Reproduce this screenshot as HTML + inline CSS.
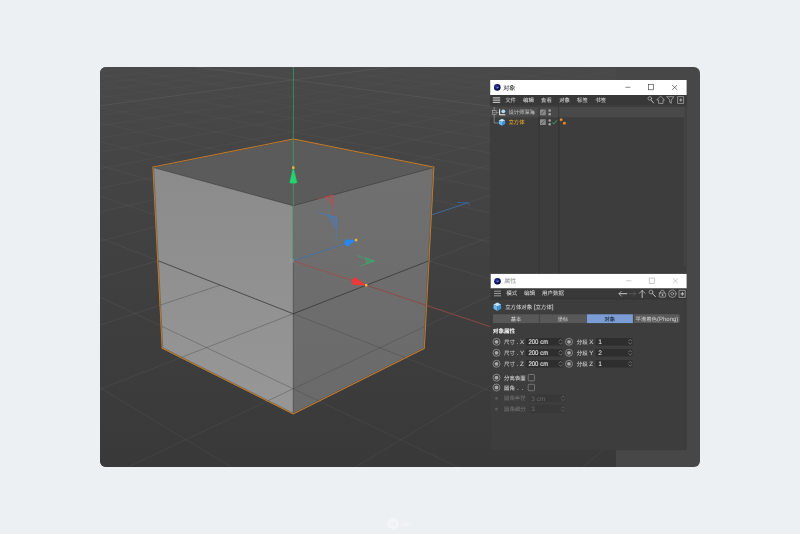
<!DOCTYPE html>
<html lang="zh-CN"><head><meta charset="utf-8"><title>C4D</title>
<style>html,body{margin:0;padding:0;background:#edf0f3;}body{width:800px;height:534px;position:relative;overflow:hidden;font-family:"Liberation Sans","Noto Sans CJK SC",sans-serif;}</style>
</head><body>
<svg width="800" height="534" viewBox="0 0 800 534" style="position:absolute;left:0;top:0" text-rendering="geometricPrecision" font-family='"Liberation Sans","Noto Sans CJK SC",sans-serif'>
<defs>
<clipPath id="vp"><rect x="100" y="67" width="600" height="400" rx="6" ry="6"/></clipPath>
<clipPath id="v3d"><rect x="100" y="67" width="516" height="400"/></clipPath>
<linearGradient id="bg" x1="0" y1="0" x2="0" y2="1"><stop offset="0" stop-color="#494949"/><stop offset="0.5" stop-color="#404040"/><stop offset="1" stop-color="#393939"/></linearGradient>
<linearGradient id="gg" gradientUnits="userSpaceOnUse" x1="0" y1="67" x2="0" y2="467"><stop offset="0" stop-color="#585858" stop-opacity="0.25"/><stop offset="0.2" stop-color="#585858" stop-opacity="0.6"/><stop offset="0.6" stop-color="#585858" stop-opacity="0.75"/><stop offset="1" stop-color="#585858" stop-opacity="0.5"/></linearGradient>
<filter id="soft" x="-5%" y="-5%" width="110%" height="110%"><feGaussianBlur stdDeviation="0.28"/></filter>
<linearGradient id="lf" x1="0" y1="0" x2="0" y2="1"><stop offset="0" stop-color="#8b8b8b"/><stop offset="1" stop-color="#979797"/></linearGradient>
<linearGradient id="rf" x1="0" y1="0" x2="0" y2="1"><stop offset="0" stop-color="#707070"/><stop offset="1" stop-color="#6a6a6a"/></linearGradient>
<radialGradient id="c4d" cx="0.35" cy="0.35" r="0.8"><stop offset="0" stop-color="#2a3aa8"/><stop offset="0.45" stop-color="#101460"/><stop offset="1" stop-color="#080a38"/></radialGradient>
<radialGradient id="tag" cx="0.35" cy="0.3" r="0.8"><stop offset="0" stop-color="#f0a04a"/><stop offset="0.6" stop-color="#c8701e"/><stop offset="1" stop-color="#7a4010"/></radialGradient>
<g id="radio"><circle r="3.5" fill="none" stroke="#b4b4b4" stroke-width="0.6"/><circle r="1.9" fill="#a8a8a8"/></g>
<g id="spin" fill="none" stroke="#a0a0a0" stroke-width="0.55" stroke-linecap="round" stroke-linejoin="round"><path d="M-1.5 -0.9 L0 -2.4 L1.5 -0.9 M-1.5 0.9 L0 2.4 L1.5 0.9"/></g>
<g id="cube"><polygon points="0,-3.9 3.5,-2.1 0,-0.3 -3.5,-2.1" fill="#bfe6ff"/><polygon points="-3.5,-2.1 0,-0.3 0,3.9 -3.5,2" fill="#6ab8ee"/><polygon points="3.5,-2.1 0,-0.3 0,3.9 3.5,2" fill="#3f93d6"/></g>
<g id="vis"><rect x="-2.9" y="-2.9" width="5.8" height="5.8" rx="0.6" fill="#8a8a8a"/><path d="M-1.7 1.7 L1.7 -1.7" stroke="#4a4a4a" stroke-width="0.8"/></g>
</defs>
<g clip-path="url(#vp)">
<rect x="100" y="67" width="600" height="400" fill="#474747"/>
<g clip-path="url(#v3d)">
<rect x="100" y="67" width="516" height="400" fill="url(#bg)"/>
<path d="M-8206.7 278.6 L300.3 -11.1M-7051.7 235.0 L-319004.9 13651.4M-8856.2 306.0 L307.3 -10.9M-6527.5 217.4 L-312913.7 13651.4M-9627.3 338.5 L314.4 -10.7M-6065.9 202.0 L-306822.4 13651.4M-10557.5 377.8 L321.5 -10.4M-5656.4 188.2 L-300731.2 13651.4M-11701.7 426.1 L328.8 -10.2M-5290.5 175.9 L-294639.9 13651.4M-13143.4 486.9 L336.2 -9.9M-4961.7 164.9 L-288548.7 13651.4M-15016.1 565.9 L343.8 -9.7M-4664.5 154.9 L-282457.5 13651.4M-17547.0 672.7 L351.4 -9.4M-4394.7 145.9 L-276366.2 13651.4M-21156.8 825.1 L359.2 -9.1M-4148.6 137.6 L-270275.0 13651.4M-36425.1 1469.4 L375.1 -8.6M-3716.1 123.1 L-258092.5 13651.4M-57602.6 2363.1 L383.2 -8.3M-3525.0 116.7 L-252001.2 13651.4M-140071.2 5843.3 L391.5 -8.1M-3348.2 110.8 L-245910.0 13651.4M-321389.2 13651.4 L400.0 -7.8M-3184.2 105.3 L-239818.8 13651.4M-315271.7 13651.4 L408.5 -7.5M-3031.6 100.2 L-233727.5 13651.4M-309154.2 13651.4 L417.2 -7.2M-2889.2 95.4 L-227636.3 13651.4M-303036.7 13651.4 L426.1 -6.9M-2756.1 90.9 L-221545.0 13651.4M-296919.2 13651.4 L435.1 -6.6M-2631.4 86.8 L-215453.8 13651.4M-290801.6 13651.4 L444.3 -6.3M-2514.3 82.8 L-209362.6 13651.4M-278566.6 13651.4 L463.2 -5.6M-2300.3 75.6 L-197180.1 13651.4M-272449.1 13651.4 L472.8 -5.3M-2202.3 72.4 L-191088.8 13651.4M-266331.6 13651.4 L482.7 -5.0M-2109.6 69.2 L-184997.6 13651.4M-260214.1 13651.4 L492.7 -4.6M-2021.8 66.3 L-178906.3 13651.4M-254096.6 13651.4 L503.0 -4.3M-1938.6 63.5 L-172815.1 13651.4M-247979.1 13651.4 L513.4 -3.9M-1859.5 60.9 L-166723.9 13651.4M-241861.5 13651.4 L524.0 -3.6M-1784.3 58.3 L-160632.6 13651.4M-235744.0 13651.4 L534.8 -3.2M-1712.7 55.9 L-154541.4 13651.4M-229626.5 13651.4 L545.8 -2.9M-1644.5 53.7 L-148450.1 13651.4M-217391.5 13651.4 L568.5 -2.1M-1517.2 49.4 L-136267.6 13651.4M-211274.0 13651.4 L580.2 -1.7M-1457.7 47.4 L-130176.4 13651.4M-205156.5 13651.4 L592.1 -1.3M-1400.8 45.5 L-124085.2 13651.4M-199038.9 13651.4 L604.2 -0.9M-1346.3 43.6 L-117993.9 13651.4M-192921.4 13651.4 L616.6 -0.5M-1293.9 41.9 L-111902.7 13651.4M-186803.9 13651.4 L629.3 -0.0M-1243.7 40.2 L-105811.4 13651.4M-180686.4 13651.4 L642.2 0.4M-1195.5 38.6 L-99720.2 13651.4M-174568.9 13651.4 L655.4 0.8M-1149.1 37.0 L-93628.9 13651.4M-168451.4 13651.4 L668.9 1.3M-1104.5 35.5 L-87537.7 13651.4M-156216.4 13651.4 L696.7 2.2M-1020.2 32.7 L-75355.2 13651.4M-150098.8 13651.4 L711.0 2.7M-980.3 31.4 L-69264.0 13651.4M-143981.3 13651.4 L725.7 3.2M-941.8 30.1 L-63172.7 13651.4M-137863.8 13651.4 L740.7 3.7M-904.7 28.8 L-57081.5 13651.4M-131746.3 13651.4 L756.1 4.2M-868.8 27.6 L-50990.2 13651.4M-125628.8 13651.4 L771.8 4.8M-834.1 26.5 L-44899.0 13651.4M-119511.3 13651.4 L787.9 5.3M-800.5 25.3 L-38807.8 13651.4M-113393.8 13651.4 L804.3 5.9M-768.1 24.3 L-32716.5 13651.4M-107276.3 13651.4 L821.1 6.4M-736.7 23.2 L-26625.3 13651.4M-95041.2 13651.4 L856.0 7.6M-676.7 21.2 L-14442.8 13651.4M-88923.7 13651.4 L874.1 8.2M-648.1 20.2 L-8351.6 13651.4M-82806.2 13651.4 L892.7 8.8M-620.4 19.3 L-2260.3 13651.4M-76688.7 13651.4 L911.7 9.5M-593.4 18.4 L3830.9 13651.4M-70571.2 13651.4 L931.2 10.1M-567.3 17.5 L9922.2 13651.4M-64453.7 13651.4 L951.2 10.8M-541.9 16.7 L16013.4 13651.4M-58336.1 13651.4 L971.8 11.5M-517.2 15.8 L22104.7 13651.4M-52218.6 13651.4 L992.8 12.2M-493.2 15.0 L28195.9 13651.4M-46101.1 13651.4 L1014.5 12.9M-469.9 14.3 L34287.1 13651.4M-39983.6 13651.4 L1036.7 13.7M-447.2 13.5 L40378.4 13651.4M-33866.1 13651.4 L1059.6 14.5M-425.1 12.7 L46469.6 13651.4M-27748.6 13651.4 L1083.1 15.2M-403.6 12.0 L52560.9 13651.4M-21631.1 13651.4 L1107.3 16.1M-382.7 11.3 L58652.1 13651.4M-15513.6 13651.4 L1132.1 16.9M-362.3 10.6 L64743.4 13651.4M-9396.0 13651.4 L1157.7 17.8M-342.4 10.0 L70834.6 13651.4M-3278.5 13651.4 L1184.1 18.6M-323.0 9.3 L76925.8 13651.4M2839.0 13651.4 L1211.2 19.6M-304.1 8.7 L83017.1 13651.4M8956.5 13651.4 L1239.2 20.5M-285.6 8.1 L89108.3 13651.4M15074.0 13651.4 L1268.1 21.5M-267.6 7.5 L95199.6 13651.4M27309.0 13651.4 L1328.6 23.5M-232.9 6.3 L107382.1 13651.4M33426.6 13651.4 L1360.3 24.6M-216.2 5.7 L113473.3 13651.4M39544.1 13651.4 L1393.1 25.7M-199.8 5.2 L119564.5 13651.4M45661.6 13651.4 L1427.0 26.8M-183.8 4.7 L125655.8 13651.4M51779.1 13651.4 L1462.1 28.0M-168.2 4.1 L131747.0 13651.4M57896.6 13651.4 L1498.4 29.2M-152.9 3.6 L137838.3 13651.4M64014.1 13651.4 L1536.0 30.5M-137.9 3.1 L143929.5 13651.4M70131.6 13651.4 L1574.9 31.8M-123.3 2.6 L150020.7 13651.4M76249.1 13651.4 L1615.3 33.2M-109.0 2.1 L156112.0 13651.4M88484.2 13651.4 L1700.7 36.1M-81.3 1.2 L168294.5 13651.4M94601.7 13651.4 L1745.9 37.6M-67.9 0.8 L174385.7 13651.4M100719.2 13651.4 L1793.0 39.2M-54.7 0.3 L180477.0 13651.4M106836.7 13651.4 L1841.9 40.8M-41.8 -0.1 L186568.2 13651.4M112954.2 13651.4 L1892.8 42.5M-29.2 -0.5 L192659.4 13651.4M119071.7 13651.4 L1946.0 44.3M-16.9 -0.9 L198750.7 13651.4M125189.3 13651.4 L2001.4 46.2M-4.7 -1.4 L204841.9 13651.4M131306.8 13651.4 L2059.2 48.1M7.1 -1.8 L210933.2 13651.4M137424.3 13651.4 L2119.7 50.2M18.8 -2.1 L217024.4 13651.4M149659.3 13651.4 L2249.3 54.5M41.4 -2.9 L229206.9 13651.4M155776.8 13651.4 L2318.8 56.9M52.4 -3.3 L235298.1 13651.4M161894.3 13651.4 L2391.8 59.3M63.2 -3.6 L241389.4 13651.4M168011.8 13651.4 L2468.5 61.9M73.8 -4.0 L247480.6 13651.4M174129.4 13651.4 L2549.2 64.6M84.2 -4.3 L253571.9 13651.4M180246.9 13651.4 L2634.3 67.5M94.4 -4.7 L259663.1 13651.4M186364.4 13651.4 L2724.1 70.5M104.4 -5.0 L265754.4 13651.4M192481.9 13651.4 L2818.9 73.7M114.2 -5.3 L271845.6 13651.4M198599.4 13651.4 L2919.4 77.1M123.9 -5.7 L277936.8 13651.4M210834.4 13651.4 L3138.9 84.5M142.7 -6.3 L290119.3 13651.4M216951.9 13651.4 L3259.3 88.6M151.9 -6.6 L296210.6 13651.4M223069.5 13651.4 L3387.6 92.9M160.9 -6.9 L302301.8 13651.4M229187.0 13651.4 L3524.7 97.5M169.8 -7.2 L308393.1 13651.4M235304.5 13651.4 L3671.6 102.4M178.5 -7.5 L314484.3 13651.4M241422.0 13651.4 L3829.2 107.8M187.0 -7.8 L320575.5 13651.4M247539.5 13651.4 L3998.9 113.5M195.5 -8.1 L326666.8 13651.4M253657.0 13651.4 L4182.1 119.6M203.7 -8.3 L80064.5 3272.0M259774.5 13651.4 L4380.5 126.3M211.9 -8.6 L44741.3 1787.6M272009.6 13651.4 L4830.8 141.5M227.8 -9.2 L24168.6 923.1M278127.1 13651.4 L5087.9 150.2M235.5 -9.4 L19779.8 738.7M284244.6 13651.4 L5370.5 159.7M243.2 -9.7 L16799.3 613.5M290362.1 13651.4 L5682.5 170.2M250.7 -9.9 L14643.1 522.8M296479.6 13651.4 L6028.9 181.9M258.1 -10.2 L13010.6 454.2M302597.1 13651.4 L6415.6 194.9M265.4 -10.4 L11731.8 400.5M308714.6 13651.4 L6850.1 209.5M272.6 -10.7 L10702.9 357.3M314832.2 13651.4 L7341.9 226.1M279.6 -10.9 L9857.3 321.7M320949.7 13651.4 L7903.0 245.0M286.6 -11.1 L9149.9 292.0" stroke="url(#gg)" stroke-width="0.5" fill="none"/>
<path d="M-7652.1 255.2 L293.5 -11.4M-7652.1 255.2 L-325096.2 13651.4M-26722.7 1059.9 L367.1 -8.9M-3923.3 130.1 L-264183.7 13651.4M-284684.1 13651.4 L453.7 -6.0M-2404.1 79.1 L-203271.3 13651.4M-223509.0 13651.4 L557.0 -2.5M-1579.4 51.5 L-142358.9 13651.4M-162333.9 13651.4 L682.6 1.8M-1061.6 34.1 L-81446.5 13651.4M-101158.7 13651.4 L838.4 7.0M-706.2 22.2 L-20534.0 13651.4M21191.5 13651.4 L1297.9 22.5M-250.1 6.9 L101290.8 13651.4M82366.7 13651.4 L1657.2 34.6M-95.0 1.7 L162203.2 13651.4M143541.8 13651.4 L2183.0 52.3M30.2 -2.5 L223115.7 13651.4M204716.9 13651.4 L3025.8 80.7M133.4 -6.0 L284028.1 13651.4M265892.1 13651.4 L4595.9 133.6M219.9 -8.9 L31272.9 1221.7M327067.2 13651.4 L8549.4 266.8M293.5 -11.4 L8549.4 266.8" stroke="#5e5e5e" stroke-width="0.6" fill="none" opacity="0.85"/>
<path d="M356.1 240.0 L467.9 202.8" stroke="#3a72b8" stroke-width="0.7" opacity="1" fill="none"/>
<polygon points="153.6,167.6 293.4,139.7 433.2,167.7 423.7,348.0 293.2,413.2 162.8,347.7" fill="none" stroke="#cc8330" stroke-width="2.3" stroke-linejoin="miter"/>
<polygon points="153.6,167.6 293.4,139.7 433.2,167.7 293.3,205.7" fill="#5b5b5b"/>
<polygon points="153.6,167.6 293.3,205.7 293.2,413.2 162.8,347.7" fill="url(#lf)"/>
<polygon points="293.3,205.7 433.2,167.7 423.7,348.0 293.2,413.2" fill="url(#rf)"/>
<clipPath id="low"><polygon points="158.4,260.8 293.2,313.7 428.3,261.0 423.7,348.0 293.2,413.2 162.8,347.7"/></clipPath>
<path d="M-8206.7 278.6 L300.3 -11.1M-7051.7 235.0 L-319004.9 13651.4M-8856.2 306.0 L307.3 -10.9M-6527.5 217.4 L-312913.7 13651.4M-9627.3 338.5 L314.4 -10.7M-6065.9 202.0 L-306822.4 13651.4M-10557.5 377.8 L321.5 -10.4M-5656.4 188.2 L-300731.2 13651.4M-11701.7 426.1 L328.8 -10.2M-5290.5 175.9 L-294639.9 13651.4M-13143.4 486.9 L336.2 -9.9M-4961.7 164.9 L-288548.7 13651.4M-15016.1 565.9 L343.8 -9.7M-4664.5 154.9 L-282457.5 13651.4M-17547.0 672.7 L351.4 -9.4M-4394.7 145.9 L-276366.2 13651.4M-21156.8 825.1 L359.2 -9.1M-4148.6 137.6 L-270275.0 13651.4M-36425.1 1469.4 L375.1 -8.6M-3716.1 123.1 L-258092.5 13651.4M-57602.6 2363.1 L383.2 -8.3M-3525.0 116.7 L-252001.2 13651.4M-140071.2 5843.3 L391.5 -8.1M-3348.2 110.8 L-245910.0 13651.4M-321389.2 13651.4 L400.0 -7.8M-3184.2 105.3 L-239818.8 13651.4M-315271.7 13651.4 L408.5 -7.5M-3031.6 100.2 L-233727.5 13651.4M-309154.2 13651.4 L417.2 -7.2M-2889.2 95.4 L-227636.3 13651.4M-303036.7 13651.4 L426.1 -6.9M-2756.1 90.9 L-221545.0 13651.4M-296919.2 13651.4 L435.1 -6.6M-2631.4 86.8 L-215453.8 13651.4M-290801.6 13651.4 L444.3 -6.3M-2514.3 82.8 L-209362.6 13651.4M-278566.6 13651.4 L463.2 -5.6M-2300.3 75.6 L-197180.1 13651.4M-272449.1 13651.4 L472.8 -5.3M-2202.3 72.4 L-191088.8 13651.4M-266331.6 13651.4 L482.7 -5.0M-2109.6 69.2 L-184997.6 13651.4M-260214.1 13651.4 L492.7 -4.6M-2021.8 66.3 L-178906.3 13651.4M-254096.6 13651.4 L503.0 -4.3M-1938.6 63.5 L-172815.1 13651.4M-247979.1 13651.4 L513.4 -3.9M-1859.5 60.9 L-166723.9 13651.4M-241861.5 13651.4 L524.0 -3.6M-1784.3 58.3 L-160632.6 13651.4M-235744.0 13651.4 L534.8 -3.2M-1712.7 55.9 L-154541.4 13651.4M-229626.5 13651.4 L545.8 -2.9M-1644.5 53.7 L-148450.1 13651.4M-217391.5 13651.4 L568.5 -2.1M-1517.2 49.4 L-136267.6 13651.4M-211274.0 13651.4 L580.2 -1.7M-1457.7 47.4 L-130176.4 13651.4M-205156.5 13651.4 L592.1 -1.3M-1400.8 45.5 L-124085.2 13651.4M-199038.9 13651.4 L604.2 -0.9M-1346.3 43.6 L-117993.9 13651.4M-192921.4 13651.4 L616.6 -0.5M-1293.9 41.9 L-111902.7 13651.4M-186803.9 13651.4 L629.3 -0.0M-1243.7 40.2 L-105811.4 13651.4M-180686.4 13651.4 L642.2 0.4M-1195.5 38.6 L-99720.2 13651.4M-174568.9 13651.4 L655.4 0.8M-1149.1 37.0 L-93628.9 13651.4M-168451.4 13651.4 L668.9 1.3M-1104.5 35.5 L-87537.7 13651.4M-156216.4 13651.4 L696.7 2.2M-1020.2 32.7 L-75355.2 13651.4M-150098.8 13651.4 L711.0 2.7M-980.3 31.4 L-69264.0 13651.4M-143981.3 13651.4 L725.7 3.2M-941.8 30.1 L-63172.7 13651.4M-137863.8 13651.4 L740.7 3.7M-904.7 28.8 L-57081.5 13651.4M-131746.3 13651.4 L756.1 4.2M-868.8 27.6 L-50990.2 13651.4M-125628.8 13651.4 L771.8 4.8M-834.1 26.5 L-44899.0 13651.4M-119511.3 13651.4 L787.9 5.3M-800.5 25.3 L-38807.8 13651.4M-113393.8 13651.4 L804.3 5.9M-768.1 24.3 L-32716.5 13651.4M-107276.3 13651.4 L821.1 6.4M-736.7 23.2 L-26625.3 13651.4M-95041.2 13651.4 L856.0 7.6M-676.7 21.2 L-14442.8 13651.4M-88923.7 13651.4 L874.1 8.2M-648.1 20.2 L-8351.6 13651.4M-82806.2 13651.4 L892.7 8.8M-620.4 19.3 L-2260.3 13651.4M-76688.7 13651.4 L911.7 9.5M-593.4 18.4 L3830.9 13651.4M-70571.2 13651.4 L931.2 10.1M-567.3 17.5 L9922.2 13651.4M-64453.7 13651.4 L951.2 10.8M-541.9 16.7 L16013.4 13651.4M-58336.1 13651.4 L971.8 11.5M-517.2 15.8 L22104.7 13651.4M-52218.6 13651.4 L992.8 12.2M-493.2 15.0 L28195.9 13651.4M-46101.1 13651.4 L1014.5 12.9M-469.9 14.3 L34287.1 13651.4M-39983.6 13651.4 L1036.7 13.7M-447.2 13.5 L40378.4 13651.4M-33866.1 13651.4 L1059.6 14.5M-425.1 12.7 L46469.6 13651.4M-27748.6 13651.4 L1083.1 15.2M-403.6 12.0 L52560.9 13651.4M-21631.1 13651.4 L1107.3 16.1M-382.7 11.3 L58652.1 13651.4M-15513.6 13651.4 L1132.1 16.9M-362.3 10.6 L64743.4 13651.4M-9396.0 13651.4 L1157.7 17.8M-342.4 10.0 L70834.6 13651.4M-3278.5 13651.4 L1184.1 18.6M-323.0 9.3 L76925.8 13651.4M2839.0 13651.4 L1211.2 19.6M-304.1 8.7 L83017.1 13651.4M8956.5 13651.4 L1239.2 20.5M-285.6 8.1 L89108.3 13651.4M15074.0 13651.4 L1268.1 21.5M-267.6 7.5 L95199.6 13651.4M27309.0 13651.4 L1328.6 23.5M-232.9 6.3 L107382.1 13651.4M33426.6 13651.4 L1360.3 24.6M-216.2 5.7 L113473.3 13651.4M39544.1 13651.4 L1393.1 25.7M-199.8 5.2 L119564.5 13651.4M45661.6 13651.4 L1427.0 26.8M-183.8 4.7 L125655.8 13651.4M51779.1 13651.4 L1462.1 28.0M-168.2 4.1 L131747.0 13651.4M57896.6 13651.4 L1498.4 29.2M-152.9 3.6 L137838.3 13651.4M64014.1 13651.4 L1536.0 30.5M-137.9 3.1 L143929.5 13651.4M70131.6 13651.4 L1574.9 31.8M-123.3 2.6 L150020.7 13651.4M76249.1 13651.4 L1615.3 33.2M-109.0 2.1 L156112.0 13651.4M88484.2 13651.4 L1700.7 36.1M-81.3 1.2 L168294.5 13651.4M94601.7 13651.4 L1745.9 37.6M-67.9 0.8 L174385.7 13651.4M100719.2 13651.4 L1793.0 39.2M-54.7 0.3 L180477.0 13651.4M106836.7 13651.4 L1841.9 40.8M-41.8 -0.1 L186568.2 13651.4M112954.2 13651.4 L1892.8 42.5M-29.2 -0.5 L192659.4 13651.4M119071.7 13651.4 L1946.0 44.3M-16.9 -0.9 L198750.7 13651.4M125189.3 13651.4 L2001.4 46.2M-4.7 -1.4 L204841.9 13651.4M131306.8 13651.4 L2059.2 48.1M7.1 -1.8 L210933.2 13651.4M137424.3 13651.4 L2119.7 50.2M18.8 -2.1 L217024.4 13651.4M149659.3 13651.4 L2249.3 54.5M41.4 -2.9 L229206.9 13651.4M155776.8 13651.4 L2318.8 56.9M52.4 -3.3 L235298.1 13651.4M161894.3 13651.4 L2391.8 59.3M63.2 -3.6 L241389.4 13651.4M168011.8 13651.4 L2468.5 61.9M73.8 -4.0 L247480.6 13651.4M174129.4 13651.4 L2549.2 64.6M84.2 -4.3 L253571.9 13651.4M180246.9 13651.4 L2634.3 67.5M94.4 -4.7 L259663.1 13651.4M186364.4 13651.4 L2724.1 70.5M104.4 -5.0 L265754.4 13651.4M192481.9 13651.4 L2818.9 73.7M114.2 -5.3 L271845.6 13651.4M198599.4 13651.4 L2919.4 77.1M123.9 -5.7 L277936.8 13651.4M210834.4 13651.4 L3138.9 84.5M142.7 -6.3 L290119.3 13651.4M216951.9 13651.4 L3259.3 88.6M151.9 -6.6 L296210.6 13651.4M223069.5 13651.4 L3387.6 92.9M160.9 -6.9 L302301.8 13651.4M229187.0 13651.4 L3524.7 97.5M169.8 -7.2 L308393.1 13651.4M235304.5 13651.4 L3671.6 102.4M178.5 -7.5 L314484.3 13651.4M241422.0 13651.4 L3829.2 107.8M187.0 -7.8 L320575.5 13651.4M247539.5 13651.4 L3998.9 113.5M195.5 -8.1 L326666.8 13651.4M253657.0 13651.4 L4182.1 119.6M203.7 -8.3 L80064.5 3272.0M259774.5 13651.4 L4380.5 126.3M211.9 -8.6 L44741.3 1787.6M272009.6 13651.4 L4830.8 141.5M227.8 -9.2 L24168.6 923.1M278127.1 13651.4 L5087.9 150.2M235.5 -9.4 L19779.8 738.7M284244.6 13651.4 L5370.5 159.7M243.2 -9.7 L16799.3 613.5M290362.1 13651.4 L5682.5 170.2M250.7 -9.9 L14643.1 522.8M296479.6 13651.4 L6028.9 181.9M258.1 -10.2 L13010.6 454.2M302597.1 13651.4 L6415.6 194.9M265.4 -10.4 L11731.8 400.5M308714.6 13651.4 L6850.1 209.5M272.6 -10.7 L10702.9 357.3M314832.2 13651.4 L7341.9 226.1M279.6 -10.9 L9857.3 321.7M320949.7 13651.4 L7903.0 245.0M286.6 -11.1 L9149.9 292.0" stroke="#484848" stroke-width="0.5" fill="none" opacity="0.8" clip-path="url(#low)"/>
<path d="M153.6 167.6 L293.3 205.7 L433.2 167.7" stroke="#3a3a3a" stroke-width="0.55" fill="none" stroke-linejoin="round"/>
<path d="M293.3 205.7 L293.2 413.2" stroke="#505050" stroke-width="0.6" fill="none"/>
<path d="M158.4 260.8 L293.2 313.7 L428.3 261.0" stroke="#2c2c2c" stroke-width="0.6" fill="none" stroke-linejoin="round"/>
<polygon points="153.6,167.6 293.4,139.7 433.2,167.7 423.7,348.0 293.2,413.2 162.8,347.7" fill="none" stroke="#5a4a38" stroke-width="0.7" stroke-linejoin="round" opacity="0.7"/>
<path d="M293.3 260.9 L293.5 -62.8" stroke="#2fa860" stroke-width="0.7" opacity="1" fill="none"/>
<path d="M293.3 260.9 L356.1 240.0" stroke="#3a72b8" stroke-width="0.7" opacity="1" fill="none"/>
<path d="M293.3 260.9 L576.7 355.5" stroke="#ac4440" stroke-width="0.65" opacity="1" fill="none"/>
<path d="M456.9 202.5 L467.9 202.8 M467.9 202.8 L469.9 205.8" stroke="#3a72b8" stroke-width="0.6" fill="none"/>
<circle cx="292.1" cy="260.9" r="1.9" fill="#a0a0a0" fill-opacity="0.25" stroke="#b0b0b0" stroke-opacity="0.5" stroke-width="0.5"/>
<polygon points="289.8,182.4 293.3,167.6 296.9,182.4 296.8,182.7 296.4,182.9 295.8,183.1 295.1,183.2 294.2,183.3 293.3,183.3 292.4,183.3 291.6,183.2 290.8,183.1 290.3,182.9 289.9,182.7" fill="#22d66e" stroke="#22d66e" stroke-width="0.4" stroke-linejoin="round"/>
<rect x="292.1" y="166.4" width="2.4" height="2.4" fill="#f2b632"/>
<polygon points="344.6,242.3 344.7,241.5 344.9,240.8 345.4,240.3 345.9,240.0 346.4,239.8 356.1,240.0 348.7,245.7 348.2,246.0 347.6,246.1 346.9,246.1 346.3,245.8 345.8,245.3 345.3,244.7 344.9,243.9 344.7,243.1" fill="#2b86ea" stroke="#2b86ea" stroke-width="0.4" stroke-linejoin="round"/>
<rect x="354.9" y="238.8" width="2.4" height="2.4" fill="#f2b632"/>
<polygon points="351.8,282.1 351.9,281.2 352.1,280.3 352.5,279.4 353.1,278.7 353.6,278.1 354.3,277.8 354.9,277.6 355.5,277.8 366.2,285.2 353.5,284.8 352.9,284.6 352.4,284.3 352.1,283.7 351.8,283.0" fill="#ea3a3a" stroke="#ea3a3a" stroke-width="0.4" stroke-linejoin="round"/>
<rect x="365.0" y="284.0" width="2.4" height="2.4" fill="#f2b632"/>
<polygon points="325.2,197.0 332.9,195.0 332.7,205.7" fill="#c24a4a" fill-opacity="0.35" stroke="#c24a4a" stroke-width="0.5"/>
<path d="M317.5 199.1 L332.9 195.0 L332.5 216.4" fill="none" stroke="#c24a4a" stroke-width="0.55"/>
<polygon points="327.6,215.1 336.6,217.5 336.4,229.2" fill="#3f7fd0" fill-opacity="0.35" stroke="#3f7fd0" stroke-width="0.5"/>
<path d="M318.8 212.7 L336.6 217.5 L336.2 240.8" fill="none" stroke="#3f7fd0" stroke-width="0.55"/>
<polygon points="365.5,258.2 374.3,260.9 366.8,263.6" fill="#2fb866" fill-opacity="0.35" stroke="#2fb866" stroke-width="0.5"/>
<path d="M356.9 255.6 L374.3 260.9 L359.2 266.4" fill="none" stroke="#2fb866" stroke-width="0.55"/>
</g>
<g filter="url(#soft)">
<rect x="490.2" y="80" width="196.40000000000003" height="194" fill="#3c3c3c"/>
<rect x="490.2" y="80" width="196.40000000000003" height="15" fill="#ffffff"/>
<circle cx="497.3" cy="87.4" r="3.3" fill="url(#c4d)"/>
<path d="M494.2 88.0a3.1 3.1 0 0 0 4.2 2.6a3.6 3.6 0 0 1 -4.2 -2.6z" fill="#3c50d0"/>
<ellipse cx="497.5" cy="87.60000000000001" rx="1.3" ry="0.8" fill="#8ea0f0" opacity="0.8" transform="rotate(-30 497.5 87.60000000000001)"/>
<text x="503.2" y="89.6" font-size="6" fill="#222" stroke="#222" stroke-width="0.06">对象</text>
<g stroke="#333" stroke-width="0.6" fill="none"><path d="M625.5 87.3H630.3"/><rect x="648.4" y="84.6" width="5.2" height="5.2"/><path d="M672 85L677.2 89.9M677.2 85L672 89.9"/></g>
<rect x="490.2" y="95" width="196.40000000000003" height="10" fill="#383838"/>
<path d="M492.8 97.9H500.2M492.8 100.1H500.2M492.8 102.3H500.2" stroke="#e6e6e6" stroke-width="0.95"/>
<text x="505.2" y="102" font-size="5.4" fill="#d6d6d6" stroke="#d6d6d6" stroke-width="0.06">文件</text>
<text x="523" y="102" font-size="5.4" fill="#d6d6d6" stroke="#d6d6d6" stroke-width="0.06">编辑</text>
<text x="541" y="102" font-size="5.4" fill="#d6d6d6" stroke="#d6d6d6" stroke-width="0.06">查看</text>
<text x="559.2" y="102" font-size="5.4" fill="#d6d6d6" stroke="#d6d6d6" stroke-width="0.06">对象</text>
<text x="577" y="102" font-size="5.4" fill="#d6d6d6" stroke="#d6d6d6" stroke-width="0.06">标签</text>
<text x="595.3" y="102" font-size="5.4" fill="#d6d6d6" stroke="#d6d6d6" stroke-width="0.06">书签</text>
<g stroke="#c8c8c8" stroke-width="0.6" fill="none" stroke-linejoin="round" stroke-linecap="round"><circle cx="649.8" cy="98.4" r="1.8"/><path d="M651.1 99.9L653.6 103" stroke-width="0.9"/><path d="M660.8 96.4L664.5 100H663V103.4H658.6V100H657.1Z"/><path d="M667 96.7H674L671.3 100V103.3L669.7 102.3V100Z"/><rect x="678" y="96.6" width="5.6" height="6.8"/><path d="M679.6 100H682M680.8 98.8V101.2" stroke-width="0.8"/></g>
<rect x="490.2" y="107" width="194.00000000000006" height="10.2" fill="#4a4a4a"/>
<rect x="684.3" y="107" width="1.2" height="159" fill="#484848"/>
<path d="M539 107V274M558.8 107V274" stroke="#303030" stroke-width="0.7"/>
<g stroke="#c0c0c0" stroke-width="0.5" fill="none"><path d="M494.2 107V110.6M494.2 114.6V123H498.5M496.2 112.6H498.5"/><rect x="492.3" y="110.6" width="3.8" height="4"/><path d="M493.2 112.6H495.3"/></g>
<g><path d="M499.6 109.3V114.8H505.3" stroke="#f0f0f0" stroke-width="1" fill="none"/><circle cx="503.3" cy="111.3" r="1.9" fill="#a8dcff"/></g>
<text x="508.4" y="114.2" font-size="5.3" fill="#b8b8b8" stroke="#b8b8b8" stroke-width="0.06">设计师深海</text>
<use href="#vis" x="542.9" y="112.3"/><circle cx="549.7" cy="110.5" r="1.3" fill="#a2a2a2"/><circle cx="549.7" cy="114.3" r="1.3" fill="#a2a2a2"/>
<g transform="translate(502 122.3) scale(0.9)"><use href="#cube"/></g>
<text x="508.4" y="124.4" font-size="5.4" fill="#e6ac2e" stroke="#e6ac2e" stroke-width="0.06">立方体</text>
<use href="#vis" x="542.9" y="122.2"/><circle cx="549.7" cy="120.5" r="1.3" fill="#a2a2a2"/><circle cx="549.7" cy="124.3" r="1.3" fill="#a2a2a2"/>
<path d="M552.2 122.4L553.7 123.9L556.9 120.3" stroke="#2fc86a" stroke-width="0.8" fill="none"/>
<circle cx="561.3" cy="119.9" r="1.7" fill="url(#tag)"/><circle cx="564.6" cy="123.4" r="1.7" fill="url(#tag)"/>
<rect x="490.7" y="273.9" width="195.90000000000003" height="176.3" fill="#3d3d3d"/>
<rect x="490.7" y="273.9" width="195.90000000000003" height="14.6" fill="#ffffff"/>
<circle cx="497.5" cy="281.2" r="3.3" fill="url(#c4d)"/>
<path d="M494.4 281.8a3.1 3.1 0 0 0 4.2 2.6a3.6 3.6 0 0 1 -4.2 -2.6z" fill="#3c50d0"/>
<ellipse cx="497.7" cy="281.4" rx="1.3" ry="0.8" fill="#8ea0f0" opacity="0.8" transform="rotate(-30 497.7 281.4)"/>
<text x="504.2" y="283.4" font-size="6" fill="#9a9a9a" stroke="#9a9a9a" stroke-width="0.06">属性</text>
<g stroke="#a8a8a8" stroke-width="0.6" fill="none"><path d="M626.3 280.8H631.3"/><rect x="649.2" y="278.1" width="5.3" height="5.3"/><path d="M672.9 278.4L678 283.4M678 278.4L672.9 283.4"/></g>
<rect x="490.7" y="288.5" width="195.90000000000003" height="10.2" fill="#393939"/>
<path d="M490.7 298.9H686.6" stroke="#2e2e2e" stroke-width="0.6"/>
<path d="M494 291.2H501M494 293.5H501M494 295.8H501" stroke="#a0a0a0" stroke-width="0.95"/>
<text x="506.2" y="295.3" font-size="5.5" fill="#d0d0d0" stroke="#d0d0d0" stroke-width="0.06">模式</text>
<text x="524" y="295.3" font-size="5.5" fill="#d0d0d0" stroke="#d0d0d0" stroke-width="0.06">编辑</text>
<text x="542" y="295.3" font-size="5.5" fill="#d0d0d0" stroke="#d0d0d0" stroke-width="0.06">用户数据</text>
<g stroke="#c8c8c8" stroke-width="0.7" fill="none" stroke-linejoin="round" stroke-linecap="round"><path d="M626.8 293.7H619.2" stroke-width="1"/><path d="M621.3 291.3L618.9 293.7L621.3 296.1"/><g stroke="#5a5a5a"><path d="M628.7 293.7H635.4" stroke-width="0.9"/><path d="M633.4 291.3L635.8 293.7L633.4 296.1"/></g><path d="M642.2 297.6V290.6" stroke-width="0.9"/><path d="M639.3 293.3L642.2 290.4L645.1 293.3"/><circle cx="651" cy="292" r="1.9" stroke-width="0.6"/><path d="M652.4 293.5L655.4 296.6" stroke-width="1"/><g stroke-width="0.6"><rect x="659.3" y="293" width="6.3" height="4.1" rx="0.5"/><path d="M660.5 293V292.2A1.9 1.9 0 0 1 664.3 292.2V293"/><circle cx="662.4" cy="295" r="0.5" fill="#c8c8c8"/><circle cx="672.3" cy="293.7" r="3.7"/><circle cx="672.3" cy="293.7" r="1.4"/><rect x="679.4" y="290.4" width="5.8" height="7"/><path d="M681 293.9H683.7M682.35 292.5V295.3" stroke-width="1"/></g></g>
<g transform="translate(497.3 306.7) scale(1.08)"><use href="#cube"/></g>
<text x="505.2" y="309" font-size="5.4" fill="#d4d4d4" stroke="#d4d4d4" stroke-width="0.06">立方体对象<tspan font-size="6.2"> [</tspan>立方体<tspan font-size="6.2">]</tspan></text>
<rect x="493" y="314.3" width="45.9" height="8.8" fill="#585858"/>
<rect x="539.6" y="314.3" width="46.4" height="8.8" fill="#585858"/>
<rect x="586.7" y="314.3" width="46.2" height="8.8" fill="#7b9dd4"/>
<path d="M633.7 314.3H678A1.8 1.8 0 0 1 679.8 316.1V321.3A1.8 1.8 0 0 1 678 323.1H633.7Z" fill="#5a5a5a"/>
<text x="516" y="320.7" font-size="5.3" fill="#c8c8c8" stroke="#c8c8c8" stroke-width="0.06" text-anchor="middle">基本</text>
<text x="562.8" y="320.7" font-size="5.3" fill="#c8c8c8" stroke="#c8c8c8" stroke-width="0.06" text-anchor="middle">坐标</text>
<text x="609.8" y="320.7" font-size="5.3" fill="#101828" stroke="#101828" stroke-width="0.06" text-anchor="middle">对象</text>
<text x="656.9" y="320.8" font-size="5.4" fill="#c8c8c8" stroke="#c8c8c8" stroke-width="0.06" text-anchor="middle">平滑着色<tspan font-size="6">(Phong)</tspan></text>
<text x="492.8" y="332.7" font-size="5.6" fill="#f0f0f0" stroke="#f0f0f0" stroke-width="0.06" font-weight="bold">对象属性</text>
<use href="#radio" x="496.5" y="341.8"/>
<text x="504" y="343.8" font-size="5.4" fill="#d0d0d0" stroke="#d0d0d0" stroke-width="0.06">尺寸<tspan font-size="6.2"> . X</tspan></text>
<rect x="525.8" y="338.0" width="37.1" height="7.6" rx="1" fill="#2f2f2f"/>
<text x="528.4" y="344.1" font-size="6.7" fill="#e0e0e0" stroke="#e0e0e0" stroke-width="0.12" textLength="19.8" lengthAdjust="spacingAndGlyphs">200 cm</text>
<use href="#spin" x="560.7" y="341.8"/>
<use href="#radio" x="569" y="341.8"/>
<text x="576.8" y="343.8" font-size="5.4" fill="#d0d0d0" stroke="#d0d0d0" stroke-width="0.06">分段<tspan font-size="6.2"> X</tspan></text>
<rect x="595.8" y="338.0" width="36.7" height="7.6" rx="1" fill="#2f2f2f"/>
<text x="598.3" y="344.1" font-size="6.6" fill="#e0e0e0" stroke="#e0e0e0" stroke-width="0.06">1</text>
<use href="#spin" x="630.2" y="341.8"/>
<use href="#radio" x="496.5" y="352.8"/>
<text x="504" y="354.8" font-size="5.4" fill="#d0d0d0" stroke="#d0d0d0" stroke-width="0.06">尺寸<tspan font-size="6.2"> . Y</tspan></text>
<rect x="525.8" y="349.0" width="37.1" height="7.6" rx="1" fill="#2f2f2f"/>
<text x="528.4" y="355.1" font-size="6.7" fill="#e0e0e0" stroke="#e0e0e0" stroke-width="0.12" textLength="19.8" lengthAdjust="spacingAndGlyphs">200 cm</text>
<use href="#spin" x="560.7" y="352.8"/>
<use href="#radio" x="569" y="352.8"/>
<text x="576.8" y="354.8" font-size="5.4" fill="#d0d0d0" stroke="#d0d0d0" stroke-width="0.06">分段<tspan font-size="6.2"> Y</tspan></text>
<rect x="595.8" y="349.0" width="36.7" height="7.6" rx="1" fill="#2f2f2f"/>
<text x="598.3" y="355.1" font-size="6.6" fill="#e0e0e0" stroke="#e0e0e0" stroke-width="0.06">2</text>
<use href="#spin" x="630.2" y="352.8"/>
<use href="#radio" x="496.5" y="363.8"/>
<text x="504" y="365.8" font-size="5.4" fill="#d0d0d0" stroke="#d0d0d0" stroke-width="0.06">尺寸<tspan font-size="6.2"> . Z</tspan></text>
<rect x="525.8" y="360.0" width="37.1" height="7.6" rx="1" fill="#2f2f2f"/>
<text x="528.4" y="366.1" font-size="6.7" fill="#e0e0e0" stroke="#e0e0e0" stroke-width="0.12" textLength="19.8" lengthAdjust="spacingAndGlyphs">200 cm</text>
<use href="#spin" x="560.7" y="363.8"/>
<use href="#radio" x="569" y="363.8"/>
<text x="576.8" y="365.8" font-size="5.4" fill="#d0d0d0" stroke="#d0d0d0" stroke-width="0.06">分段<tspan font-size="6.2"> Z</tspan></text>
<rect x="595.8" y="360.0" width="36.7" height="7.6" rx="1" fill="#2f2f2f"/>
<text x="598.3" y="366.1" font-size="6.6" fill="#e0e0e0" stroke="#e0e0e0" stroke-width="0.06">1</text>
<use href="#spin" x="630.2" y="363.8"/>
<use href="#radio" x="496.5" y="377.7"/>
<text x="504" y="379.7" font-size="5.4" fill="#d0d0d0" stroke="#d0d0d0" stroke-width="0.06">分离表面</text>
<rect x="528.2" y="374.5" width="6.4" height="6.4" rx="1" fill="none" stroke="#9a9a9a" stroke-width="0.6"/>
<use href="#radio" x="496.5" y="387.5"/>
<text x="504" y="389.5" font-size="5.4" fill="#d0d0d0" stroke="#d0d0d0" stroke-width="0.06">圆角<tspan font-size="6.4" letter-spacing="0.5"> . .</tspan></text>
<rect x="528.2" y="384.3" width="6.4" height="6.4" rx="1" fill="none" stroke="#9a9a9a" stroke-width="0.6"/>
<circle cx="496.5" cy="398.3" r="1.5" fill="#585858"/>
<text x="504" y="400.3" font-size="5.4" fill="#707070" stroke="#707070" stroke-width="0.06">圆角半径</text>
<rect x="529" y="394.5" width="36.5" height="7.6" rx="1" fill="#383838"/>
<text x="531.2" y="400.6" font-size="6.5" fill="#686868" stroke="#686868" stroke-width="0.06">3 cm</text>
<use href="#spin" x="563" y="398.3" opacity="0.6"/>
<circle cx="496.5" cy="409" r="1.5" fill="#585858"/>
<text x="504" y="411" font-size="5.4" fill="#707070" stroke="#707070" stroke-width="0.06">圆角细分</text>
<rect x="529" y="405.2" width="36.5" height="7.6" rx="1" fill="#383838"/>
<text x="531.2" y="411.3" font-size="6.5" fill="#686868" stroke="#686868" stroke-width="0.06">3</text>
<use href="#spin" x="563" y="409" opacity="0.6"/>
</g>
</g>
<g opacity="0.55"><circle cx="393" cy="523.5" r="5.8" fill="#f8fafb"/><text x="393" y="526" font-size="6.5" font-weight="bold" fill="#eceff2" text-anchor="middle">UI</text><text x="400.6" y="526" font-size="7.2" font-weight="bold" fill="#f8fafb">.cn</text></g>
</svg>
</body></html>
